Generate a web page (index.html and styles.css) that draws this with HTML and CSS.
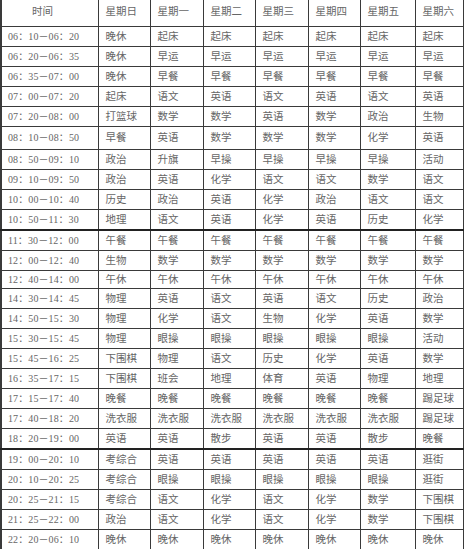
FILE: index.html
```html
<!DOCTYPE html>
<html lang="zh-CN">
<head>
<meta charset="utf-8">
<title>作息时间表</title>
<link rel="stylesheet" href="styles.css">
</head>
<body>
<table class="schedule">
  <colgroup>
    <col class="c-time"><col class="c-d1"><col class="c-d2"><col class="c-d1"><col class="c-d2"><col class="c-d1"><col class="c-fri"><col class="c-sat">
  </colgroup>
  <thead>
    <tr class="head"><th class="t-head">时间</th><th>星期日</th><th>星期一</th><th>星期二</th><th>星期三</th><th>星期四</th><th>星期五</th><th>星期六</th></tr>
  </thead>
  <tbody>
    <tr><td>06：10－06：20</td><td>晚休</td><td>起床</td><td>起床</td><td>起床</td><td>起床</td><td>起床</td><td>起床</td></tr>
    <tr><td>06：20－06：35</td><td>晚休</td><td>早运</td><td>早运</td><td>早运</td><td>早运</td><td>早运</td><td>早运</td></tr>
    <tr><td>06：35－07：00</td><td>晚休</td><td>早餐</td><td>早餐</td><td>早餐</td><td>早餐</td><td>早餐</td><td>早餐</td></tr>
    <tr><td>07：00－07：20</td><td>起床</td><td>语文</td><td>英语</td><td>语文</td><td>英语</td><td>语文</td><td>英语</td></tr>
    <tr><td>07：20－08：00</td><td>打篮球</td><td>数学</td><td>数学</td><td>英语</td><td>数学</td><td>政治</td><td>生物</td></tr>
    <tr class="tall"><td>08：10－08：50</td><td>早餐</td><td>英语</td><td>数学</td><td>数学</td><td>数学</td><td>化学</td><td>英语</td></tr>
    <tr><td>08：50－09：10</td><td>政治</td><td>升旗</td><td>早操</td><td>早操</td><td>早操</td><td>早操</td><td>活动</td></tr>
    <tr><td>09：10－09：50</td><td>政治</td><td>英语</td><td>化学</td><td>语文</td><td>语文</td><td>数学</td><td>语文</td></tr>
    <tr><td>10：00－10：40</td><td>历史</td><td>政治</td><td>英语</td><td>化学</td><td>政治</td><td>语文</td><td>语文</td></tr>
    <tr class="split"><td>10：50－11：30</td><td>地理</td><td>语文</td><td>英语</td><td>化学</td><td>英语</td><td>历史</td><td>化学</td></tr>
    <tr><td>11：30－12：00</td><td>午餐</td><td>午餐</td><td>午餐</td><td>午餐</td><td>午餐</td><td>午餐</td><td>午餐</td></tr>
    <tr><td>12：00－12：40</td><td>生物</td><td>数学</td><td>数学</td><td>数学</td><td>数学</td><td>数学</td><td>数学</td></tr>
    <tr class="short"><td>12：40－14：00</td><td>午休</td><td>午休</td><td>午休</td><td>午休</td><td>午休</td><td>午休</td><td>午休</td></tr>
    <tr><td>14：30－14：45</td><td>物理</td><td>英语</td><td>语文</td><td>英语</td><td>语文</td><td>历史</td><td>政治</td></tr>
    <tr><td>14：50－15：30</td><td>物理</td><td>化学</td><td>语文</td><td>生物</td><td>化学</td><td>英语</td><td>数学</td></tr>
    <tr><td>15：30－15：45</td><td>物理</td><td>眼操</td><td>眼操</td><td>眼操</td><td>眼操</td><td>眼操</td><td>活动</td></tr>
    <tr><td>15：45－16：25</td><td>下围棋</td><td>物理</td><td>语文</td><td>历史</td><td>化学</td><td>英语</td><td>数学</td></tr>
    <tr><td>16：35－17：15</td><td>下围棋</td><td>班会</td><td>地理</td><td>体育</td><td>英语</td><td>物理</td><td>地理</td></tr>
    <tr><td>17：15－17：40</td><td>晚餐</td><td>晚餐</td><td>晚餐</td><td>晚餐</td><td>晚餐</td><td>晚餐</td><td>踢足球</td></tr>
    <tr><td>17：40－18：20</td><td>洗衣服</td><td>洗衣服</td><td>洗衣服</td><td>洗衣服</td><td>洗衣服</td><td>洗衣服</td><td>踢足球</td></tr>
    <tr class="split"><td>18：20－19：00</td><td>英语</td><td>英语</td><td>散步</td><td>英语</td><td>英语</td><td>散步</td><td>晚餐</td></tr>
    <tr><td>19：00－20：10</td><td>考综合</td><td>英语</td><td>英语</td><td>英语</td><td>英语</td><td>英语</td><td>逛街</td></tr>
    <tr><td>20：10－20：25</td><td>考综合</td><td>眼操</td><td>眼操</td><td>眼操</td><td>眼操</td><td>眼操</td><td>逛街</td></tr>
    <tr><td>20：25－21：15</td><td>考综合</td><td>语文</td><td>化学</td><td>语文</td><td>化学</td><td>数学</td><td>下围棋</td></tr>
    <tr><td>21：25－22：00</td><td>政治</td><td>语文</td><td>化学</td><td>语文</td><td>化学</td><td>数学</td><td>下围棋</td></tr>
    <tr><td>22：20－06：10</td><td>晚休</td><td>晚休</td><td>晚休</td><td>晚休</td><td>晚休</td><td>晚休</td><td>晚休</td></tr>
  </tbody>
</table>
</body>
</html>
```

FILE: styles.css
```css
html, body {
  margin: 0;
  padding: 0;
  background: #ffffff;
}

.schedule {
  border-collapse: collapse;
  table-layout: fixed;
  width: 463px;
  font-family: "Liberation Serif", "Noto Sans CJK SC", serif;
  font-size: 10.5px;
  color: #666666;
  border-left: 2px solid #3a3a3a;
  border-right: 1px solid #3a3a3a;
  border-bottom: 1px solid #3a3a3a;
}

.c-time { width: 97px; }
.c-d1 { width: 52px; }
.c-d2 { width: 53px; }
.c-fri { width: 55px; }
.c-sat { width: 48px; }

.schedule th,
.schedule td {
  padding: 0 0 0 7px;
  text-align: left;
  vertical-align: middle;
  white-space: nowrap;
  overflow: hidden;
  font-weight: normal;
  border-right: 1px solid #3a3a3a;
  border-bottom: 1px solid #3a3a3a;
  line-height: 12px;
}

.schedule td:first-child {
  padding-left: 6px;
  font-size: 10px;
  letter-spacing: 0.1px;
}

.head th {
  height: 24px;
  border-top: none;
  padding-bottom: 2px;
}

.head .t-head {
  padding-left: 30px;
}

.schedule tbody tr td {
  height: 19px;
}

.schedule tbody tr.tall td {
  height: 22px;
}

.schedule tbody tr.short td {
  height: 17px;
}

.schedule tbody tr.split td {
  border-bottom: 2px solid #222222;
}
```
